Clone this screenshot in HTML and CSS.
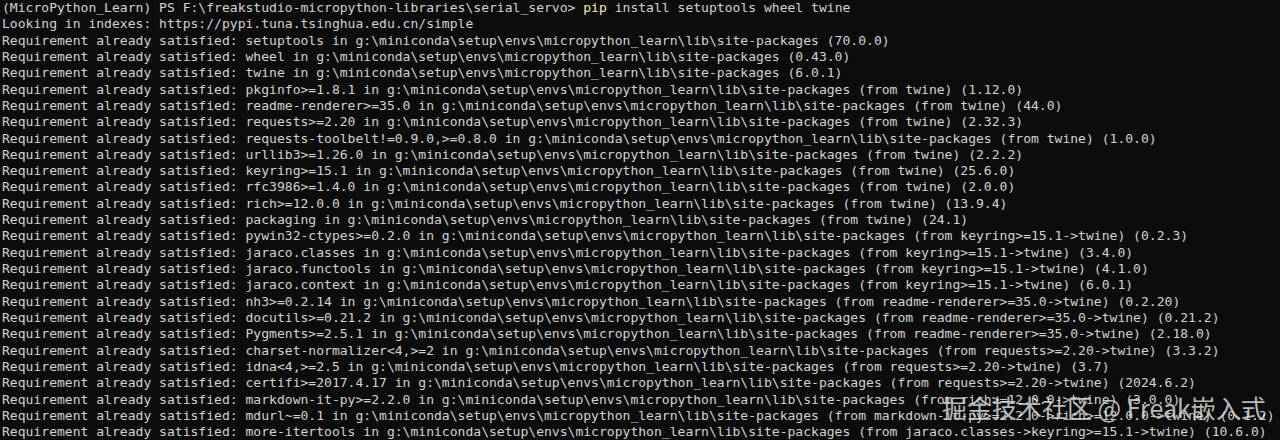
FILE: index.html
```html
<!DOCTYPE html>
<html lang="en">
<head>
<meta charset="utf-8">
<title>Terminal</title>
<link rel="stylesheet" href="styles.css">
</head>
<body>
<div class="terminal">
<pre class="output">(MicroPython_Learn) PS F:\freakstudio-micropython-libraries\serial_servo&gt; <span class="cmd">pip</span> install setuptools wheel twine
Looking in indexes: https://pypi.tuna.tsinghua.edu.cn/simple
Requirement already satisfied: setuptools in g:\miniconda\setup\envs\micropython_learn\lib\site-packages (70.0.0)
Requirement already satisfied: wheel in g:\miniconda\setup\envs\micropython_learn\lib\site-packages (0.43.0)
Requirement already satisfied: twine in g:\miniconda\setup\envs\micropython_learn\lib\site-packages (6.0.1)
Requirement already satisfied: pkginfo&gt;=1.8.1 in g:\miniconda\setup\envs\micropython_learn\lib\site-packages (from twine) (1.12.0)
Requirement already satisfied: readme-renderer&gt;=35.0 in g:\miniconda\setup\envs\micropython_learn\lib\site-packages (from twine) (44.0)
Requirement already satisfied: requests&gt;=2.20 in g:\miniconda\setup\envs\micropython_learn\lib\site-packages (from twine) (2.32.3)
Requirement already satisfied: requests-toolbelt!=0.9.0,&gt;=0.8.0 in g:\miniconda\setup\envs\micropython_learn\lib\site-packages (from twine) (1.0.0)
Requirement already satisfied: urllib3&gt;=1.26.0 in g:\miniconda\setup\envs\micropython_learn\lib\site-packages (from twine) (2.2.2)
Requirement already satisfied: keyring&gt;=15.1 in g:\miniconda\setup\envs\micropython_learn\lib\site-packages (from twine) (25.6.0)
Requirement already satisfied: rfc3986&gt;=1.4.0 in g:\miniconda\setup\envs\micropython_learn\lib\site-packages (from twine) (2.0.0)
Requirement already satisfied: rich&gt;=12.0.0 in g:\miniconda\setup\envs\micropython_learn\lib\site-packages (from twine) (13.9.4)
Requirement already satisfied: packaging in g:\miniconda\setup\envs\micropython_learn\lib\site-packages (from twine) (24.1)
Requirement already satisfied: pywin32-ctypes&gt;=0.2.0 in g:\miniconda\setup\envs\micropython_learn\lib\site-packages (from keyring&gt;=15.1-&gt;twine) (0.2.3)
Requirement already satisfied: jaraco.classes in g:\miniconda\setup\envs\micropython_learn\lib\site-packages (from keyring&gt;=15.1-&gt;twine) (3.4.0)
Requirement already satisfied: jaraco.functools in g:\miniconda\setup\envs\micropython_learn\lib\site-packages (from keyring&gt;=15.1-&gt;twine) (4.1.0)
Requirement already satisfied: jaraco.context in g:\miniconda\setup\envs\micropython_learn\lib\site-packages (from keyring&gt;=15.1-&gt;twine) (6.0.1)
Requirement already satisfied: nh3&gt;=0.2.14 in g:\miniconda\setup\envs\micropython_learn\lib\site-packages (from readme-renderer&gt;=35.0-&gt;twine) (0.2.20)
Requirement already satisfied: docutils&gt;=0.21.2 in g:\miniconda\setup\envs\micropython_learn\lib\site-packages (from readme-renderer&gt;=35.0-&gt;twine) (0.21.2)
Requirement already satisfied: Pygments&gt;=2.5.1 in g:\miniconda\setup\envs\micropython_learn\lib\site-packages (from readme-renderer&gt;=35.0-&gt;twine) (2.18.0)
Requirement already satisfied: charset-normalizer&lt;4,&gt;=2 in g:\miniconda\setup\envs\micropython_learn\lib\site-packages (from requests&gt;=2.20-&gt;twine) (3.3.2)
Requirement already satisfied: idna&lt;4,&gt;=2.5 in g:\miniconda\setup\envs\micropython_learn\lib\site-packages (from requests&gt;=2.20-&gt;twine) (3.7)
Requirement already satisfied: certifi&gt;=2017.4.17 in g:\miniconda\setup\envs\micropython_learn\lib\site-packages (from requests&gt;=2.20-&gt;twine) (2024.6.2)
Requirement already satisfied: markdown-it-py&gt;=2.2.0 in g:\miniconda\setup\envs\micropython_learn\lib\site-packages (from rich&gt;=12.0.0-&gt;twine) (3.0.0)
Requirement already satisfied: mdurl~=0.1 in g:\miniconda\setup\envs\micropython_learn\lib\site-packages (from markdown-it-py&gt;=2.2.0-&gt;rich&gt;=12.0.0-&gt;twine) (0.1.2)
Requirement already satisfied: more-itertools in g:\miniconda\setup\envs\micropython_learn\lib\site-packages (from jaraco.classes-&gt;keyring&gt;=15.1-&gt;twine) (10.6.0)</pre>
<div class="watermark">掘金技术社区 @ Freak嵌入式</div>
</div>
</body>
</html>
```

FILE: styles.css
```css
html, body {
  margin: 0;
  padding: 0;
  background: #0c0c0c;
  width: 1280px;
  height: 440px;
  overflow: hidden;
}

.terminal {
  position: relative;
  width: 1280px;
  height: 440px;
  padding: 0 0 0 2px;
  box-sizing: border-box;
}

.output {
  margin: 0;
  font-family: "DejaVu Sans Mono", "Liberation Mono", monospace;
  font-size: 13.05px;
  line-height: 16.32px;
  color: #d2d2d2;
  white-space: pre;
}

.cmd {
  color: #f9f1a5;
}

.watermark {
  position: absolute;
  left: 942px;
  top: 392px;
  font-family: "Noto Sans CJK SC", "Noto Sans", sans-serif;
  font-size: 25px;
  line-height: 30px;
  color: rgba(255, 255, 255, 0.72);
  text-shadow: 0 0 2px rgba(0, 0, 0, 0.5);
  white-space: nowrap;
}
```
